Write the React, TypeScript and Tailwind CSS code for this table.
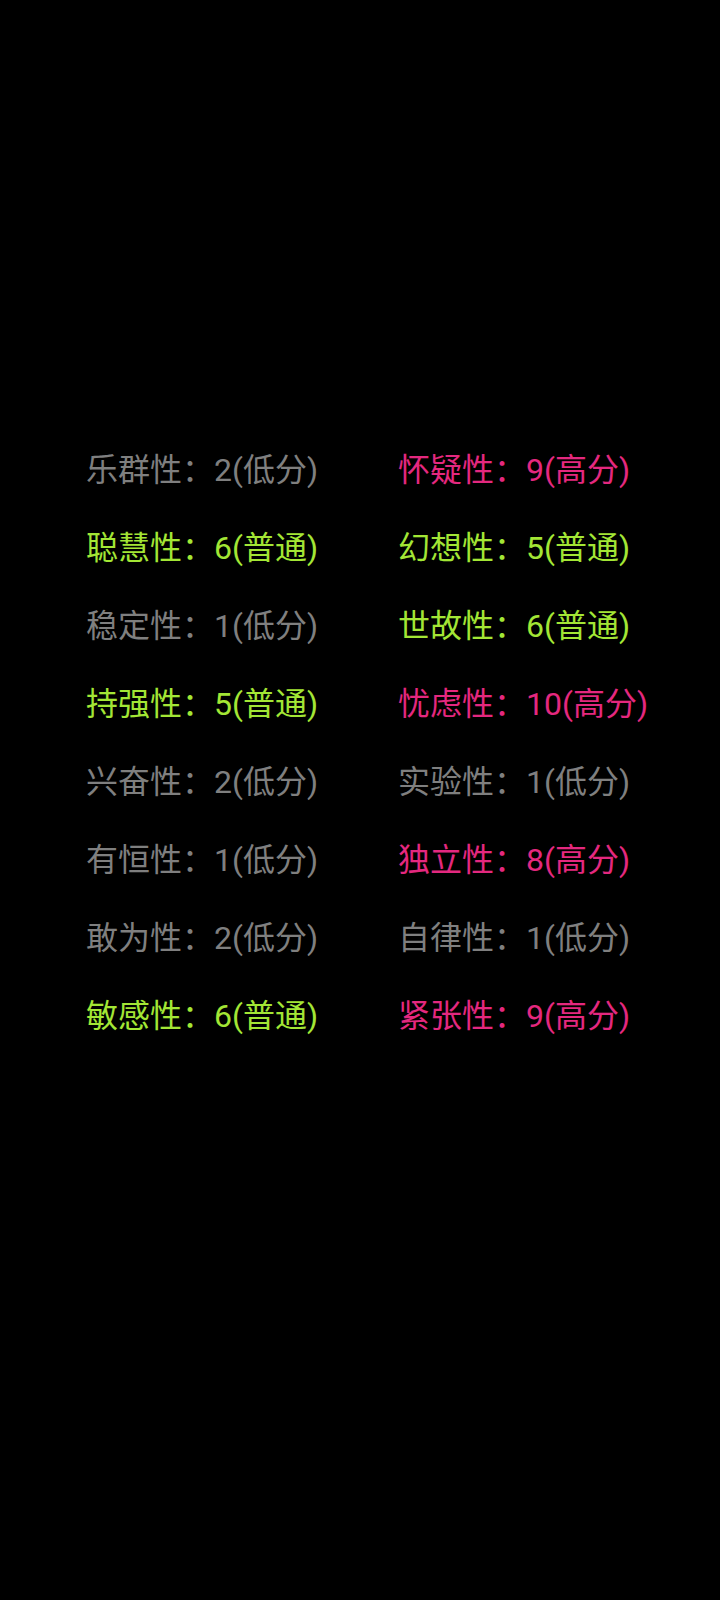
import React from "react";

type Item = { name: string; score: number; level: "低分" | "普通" | "高分" };

const rows: [Item, Item][] = [
  [{ name: "乐群性", score: 2, level: "低分" }, { name: "怀疑性", score: 9, level: "高分" }],
  [{ name: "聪慧性", score: 6, level: "普通" }, { name: "幻想性", score: 5, level: "普通" }],
  [{ name: "稳定性", score: 1, level: "低分" }, { name: "世故性", score: 6, level: "普通" }],
  [{ name: "持强性", score: 5, level: "普通" }, { name: "忧虑性", score: 10, level: "高分" }],
  [{ name: "兴奋性", score: 2, level: "低分" }, { name: "实验性", score: 1, level: "低分" }],
  [{ name: "有恒性", score: 1, level: "低分" }, { name: "独立性", score: 8, level: "高分" }],
  [{ name: "敢为性", score: 2, level: "低分" }, { name: "自律性", score: 1, level: "低分" }],
  [{ name: "敏感性", score: 6, level: "普通" }, { name: "紧张性", score: 9, level: "高分" }],
];

function Cell({ item }: { item: Item }) {
  const cls =
    item.level === "低分"
      ? "text-[#7f7f7f]"
      : item.level === "普通"
      ? "text-[#a3e635]"
      : "text-[#e4287f]";
  return (
    <div className={`${cls} whitespace-nowrap`}>
      {item.name}：{item.score}({item.level})
    </div>
  );
}

export default function App() {
  return (
    <div
      className="w-[720px] h-[1600px] bg-black pt-[431px]"
      style={{ fontFamily: 'Roboto, "Noto Sans CJK SC", sans-serif' }}
    >
      <div className="grid grid-cols-[312px_312px] pl-[86px] text-[32px] leading-[78px]">
        {rows.map(([a, b], i) => (
          <React.Fragment key={i}>
            <Cell item={a} />
            <Cell item={b} />
          </React.Fragment>
        ))}
      </div>
    </div>
  );
}
